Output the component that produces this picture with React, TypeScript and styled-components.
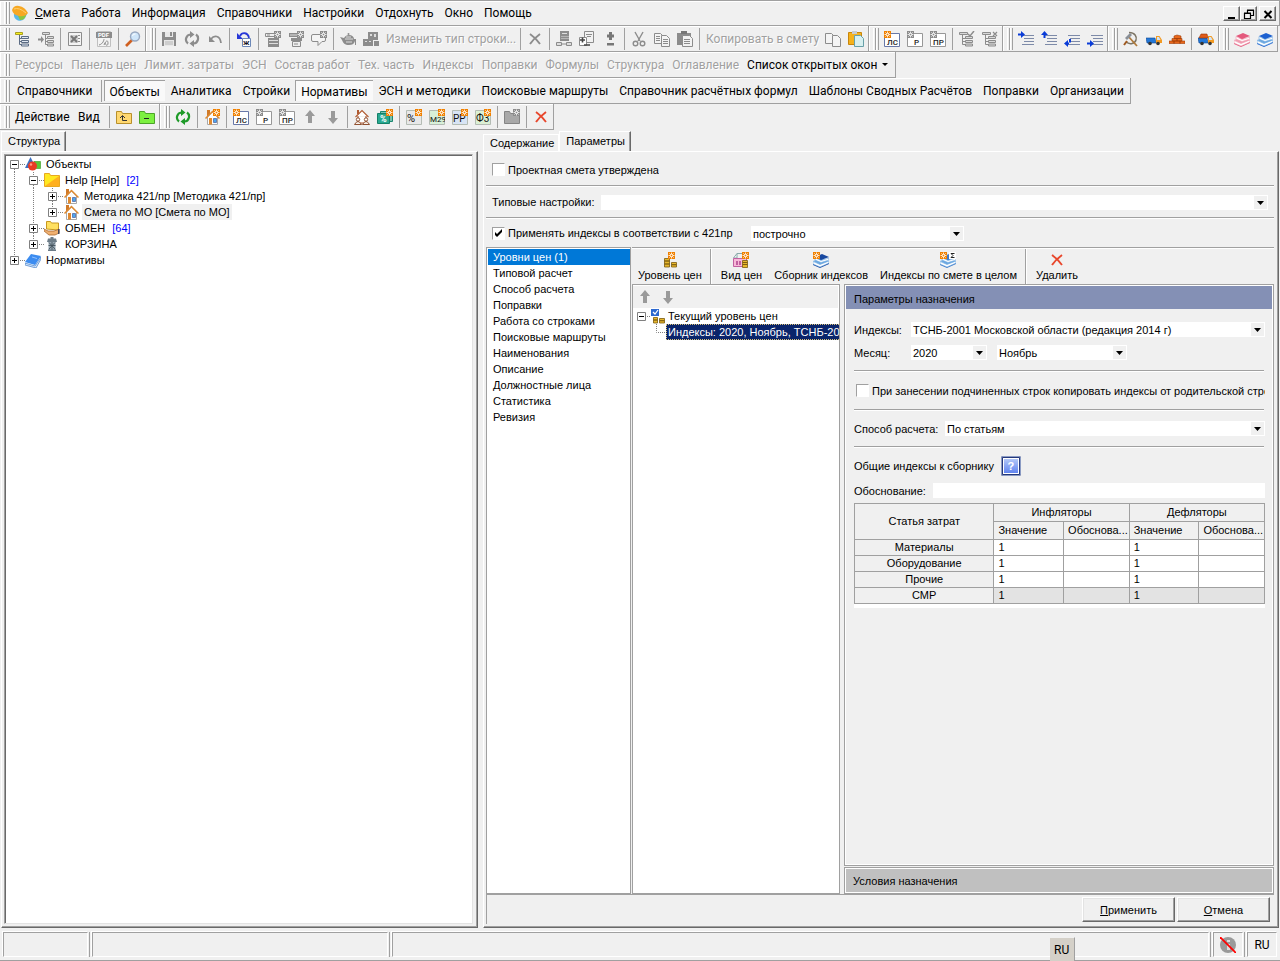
import React, { ReactNode } from "react";
import styled, { createGlobalStyle, css } from "styled-components";

const c = {
  face: "#f0f0f0",
  line: "#a0a0a0",
  dark: "#696969",
  light: "#ffffff",
  soft: "#e3e3e3",
  sky: "#0078d7",
  navy: "#0a246a",
};
const barFont = `Roboto, "Open Sans", sans-serif`;
const formFont = `"Liberation Sans", Arial, sans-serif`;

const GlobalStyle = createGlobalStyle`
  *, *::before, *::after { box-sizing: border-box; }
  body { margin: 0; background: ${c.face}; color: #000; font: 11px/16px ${formFont}; }
  button, select, input { font: inherit; color: inherit; margin: 0; border-radius: 0; }
  button { background: none; border: 0; padding: 0; white-space: nowrap; }
`;

/* ---------- icons ---------- */

const Svg = styled.svg`
  display: block;
  flex: none;
  width: 16px;
  height: 16px;
`;

const G = "#8c8c8c";

const star = (x: number, y: number, color = "#f08000") => (
  <g transform={`translate(${x} ${y})`}>
    <rect width="7" height="7" fill={color} />
    <path d="M3.500 .5v6M.5 3.500h6M1.400 1.400l4.200 4.200M5.600 1.400L1.400 5.600" stroke="#fff" strokeWidth=".8" />
    <circle cx="3.500" cy="3.500" r="1.200" fill={color} stroke="#fff" strokeWidth=".8" />
  </g>
);

const letters = (t: string, color: string, frame: string, x: number) => (
  <>
    <path d="M.5 2.500h15v13H.5z" fill="#fff" stroke={frame} />
    <text x={x} y="14" fontSize="8" fontWeight="500" fontFamily="Roboto, sans-serif" fill="#222">{t}</text>
    {star(0, 0, color)}
  </>
);
const form = (t: string, tint: string, size = 9) => (
  <>
    <path d="M.5 1.500h15v14H.5z" fill={tint} stroke="#b4bcb4" />
    <text x="1" y="13" fontSize={size} fontFamily="Roboto, sans-serif" fill="#111">{t}</text>
    {star(9, 0)}
  </>
);
const house = (
  <>
    <path d="M3 1h3v6H3z" fill="#d07a28" />
    <path d="M3.500 8v7.500h10V8L8.500 3z" fill="#fdfdfd" stroke="#a8a8a8" />
    <path d="M1.500 9.500l7-7 7 7" fill="none" stroke="#e08a30" strokeWidth="1.500" />
    <path d="M5 9h3v6.500H5z" fill="#e08a30" />
    <path d="M9.500 9.500h3v4h-3z" fill="#4ba8f0" stroke="#4a5a98" strokeWidth=".7" />
  </>
);
const grayTree = (
  <>
    <path d="M.5 1.500h8v2h-8z" fill="#d8d8d8" stroke={G} />
    <path d="M3.500 4v9.500H7M3.500 7.500H7M3.500 10.500H7" fill="none" stroke={G} />
    <path d="M6.500 5.500h7v2h-7zM6.500 9.500h7v2h-7zM6.500 13h7v2h-7z" fill="#d8d8d8" stroke={G} />
  </>
);
const cylinders = (
  <g fill="#e8b72c" stroke="#7a5a10" strokeWidth=".8">
    <path d="M2.500 6.500h5v2.500h-5zM2.500 9h5v3h-5zM2.500 12h5v3h-5zM9.500 10.500h5v2.200h-5zM9.500 12.700h5V15h-5z" />
  </g>
);
const books = (a: string, b: string) => (
  <>
    <path d="M0 11.500L7 14.500l9-4V12l-9 4-7-3z" fill={b} />
    <path d="M0 9.500l7 3 9-3.500v2L7 15l-7-3z" fill="#fff" stroke={a} strokeWidth=".6" />
    <path d="M0 9l7-2.500L16 9l-9 3.500z" fill={a} />
    <path d="M2 5.500l6 3L16 6v2l-8 2.500L2 8z" fill="#fff" stroke={a} strokeWidth=".6" />
    <path d="M2 5l7-3 7 3-8 3z" fill={b} />
  </>
);
const truck = (
  <>
    <path d="M0 7h9l1 5H1z" fill="#2277d8" stroke="#124a94" strokeWidth=".6" />
    <path d="M10 5h3.500L16 9v3h-6z" fill="#f39a22" />
    <path d="M11 6h2l1.500 3H11z" fill="#cfe4f6" />
    <circle cx="4" cy="12.500" r="1.800" fill="#333" />
    <circle cx="12" cy="12.500" r="1.800" fill="#333" />
  </>
);
const rows = (arrow: string) => (
  <>
    <path d="M4 4.500h12M6 7.500h10M6 10.500h10M4 13.500h12" stroke="#7d8aa8" />
    <path d={arrow} fill="#0a3cd8" />
  </>
);
const cycle = (color: string) => (
  <>
    <path d="M4 12.500A5 5 0 0 1 6.500 3.500M12 3.500a5 5 0 0 1-2.500 9" fill="none" stroke={color} strokeWidth="2.200" />
    <path d="M6 0l4.500 3.500L6 7zM10 9v7l-4.500-3.500z" fill={color} />
  </>
);
const folder = (a: string, b: string) => (
  <path d="M.5 14.500V2.500h5l1 2h9v10z" fill={a} stroke={b} />
);
const cross = (color: string) => (
  <path d="M3 3c3 2 7 6 10 10M13 3C9 6 5 10 3 13" fill="none" stroke={color} strokeWidth="1.900" />
);
const pages = (a: string, lines: boolean) => (
  <g fill={a} stroke={G}>
    <path d="M.5 2.500h6l2 2v8h-8z" />
    <path d="M7.500 4.500h5l3 3v8h-8z" />
    {lines && <path d="M2 5.500h4M2 7.500h4M2 9.500h4M9 8.500h5M9 10.500h5M9 12.500h5" />}
  </g>
);

const ICONS: Record<string, ReactNode> = {
  app: (
    <>
      <path d="M2 9a6 6 0 0 0 11 4l2-4z" fill="#5ab8e8" />
      <path d="M8 15a6 6 0 0 0 6-5l-8 1z" fill="#8cc63f" />
      <path d="M0 5Q2 0 7 1q6 1 9 7-3 4-9 3Q1 10 0 5z" fill="#f7a823" />
      <path d="M2 4q5-2 12 4" stroke="#ffd070" fill="none" />
    </>
  ),
  treeYellow: (
    <>
      <path d="M.5 1.500h7v2h-7z" fill="#f8f020" stroke="#a8a020" />
      <path d="M4.500 4v9.500H7M4.500 7.500H7M4.500 10.500H7" fill="none" stroke="#5c6c84" />
      <path d="M6.500 5.500h7v2h-7zM6.500 9.500h7v2h-7zM6.500 13h7v2h-7z" fill="#dfe7f2" stroke="#5c6c84" />
    </>
  ),
  treeIndent: (
    <>
      <path d="M4.500 1.500h7v2h-7z" fill="#ddd" stroke={G} />
      <path d="M7.500 4v9.500H9M7.500 7.500H9M7.500 10.500H9" fill="none" stroke={G} />
      <path d="M9.500 5.500h6v2h-6zM9.500 9.500h6v2h-6zM9.500 13h6v2h-6z" fill="#ddd" stroke={G} />
      <path d="M0 7.500h3V5l3 3.500L3 12V9.500H0z" fill={G} />
    </>
  ),
  excel: (
    <>
      <path d="M1.500 1.500h13v13h-13z" fill="#f4f4f4" stroke={G} />
      <path d="M3 4h8v8H3z" fill="#d0d0d0" />
      <path d="M4 5l6 6M10 5l-6 6" stroke="#777" strokeWidth="2" />
      <path d="M11 4.500h2M11 7.500h2M11 10.500h2" stroke={G} />
    </>
  ),
  pdf: (
    <>
      <path d="M1.500.5h13v15h-13z" fill="#f4f4f4" stroke="#c0c0c0" />
      <path d="M0 1h16v6H0z" fill={G} />
      <text x="2" y="6" fontSize="6" fontWeight="700" fontFamily="Roboto, sans-serif" fill="#fff">PDF</text>
      <path d="M3 14c4-1 5-5 5-6M8 14c2-5 4-5 4-2s-2 3-3 0" fill="none" stroke={G} />
    </>
  ),
  magnifier: (
    <>
      <path d="M7 9l-6 6" stroke="#d06020" strokeWidth="2.600" />
      <circle cx="10" cy="5.500" r="4.500" fill="#cfe6fa" stroke="#98a8c0" strokeWidth="1.400" />
      <path d="M7.500 5a2.500 2.500 0 0 1 3-2" stroke="#fff" fill="none" />
    </>
  ),
  save: (
    <>
      <path d="M1 1h14v14H1z" fill={G} />
      <path d="M4 1h8v5H4zM3 9h10v6H3z" fill="#e8e8e8" />
      <path d="M9 1h2v4H9z" fill={G} />
      <path d="M4 11h8M4 13h8" stroke="#b4b4b4" />
    </>
  ),
  cycleGray: cycle(G),
  cycleGreen: cycle("#1e9a28"),
  undo: (
    <>
      <path d="M4 8c3-4 9-4 10 4" fill="none" stroke={G} strokeWidth="1.800" />
      <path d="M2 5v6h6z" fill={G} />
    </>
  ),
  undoLetter: (
    <>
      <path d="M4 5c2-4 8-4 9 2" fill="none" stroke="#2838d8" strokeWidth="1.800" />
      <path d="M1 2v6h6z" fill="#2838d8" />
      <path d="M6.500 7.500h8v8h-8z" fill="#fff" stroke="#6c88b8" />
      <text x="7" y="14" fontSize="8" fontWeight="500" fontFamily="Roboto, sans-serif" fill="#112">ж</text>
    </>
  ),
  tableTop: (
    <>
      <path d="M.5 2.500h9v3h-9z" fill="#eee" stroke={G} />
      <path d="M2 4h3" stroke={G} />
      <path d="M3 7h11v9H3z" fill={G} />
      <path d="M4 9.500h9M4 12.500h9" stroke="#ddd" />
      {star(9, 0, G)}
    </>
  ),
  tableBottom: (
    <>
      <path d="M1 2h9v4H1zM3 7h11v3H3z" fill={G} />
      <path d="M2 4h7" stroke="#ddd" />
      <path d="M4.500 10.500h8v5h-8z" fill="#eee" stroke={G} />
      <path d="M6 13h4" stroke={G} />
      {star(9, 0, G)}
    </>
  ),
  comment: (
    <>
      <path d="M2 3.500h11q1.500 0 1.500 1.500v4q0 1.500-1.500 1.500h-2L7 14.500v-4H2Q.5 10.500.5 9V5Q.5 3.500 2 3.500z" fill="#f4f4f4" stroke={G} />
      {star(9, 0, G)}
    </>
  ),
  teapot: (
    <>
      <path d="M0 6l4 1c1-2 3-3 5-3 3 0 5 2 5 4h2v6h-1v-4c-1 3-3 4-6 4-4 0-6-2-7-5z" fill={G} />
      <path d="M6 6h5M5 8h8M6 11h6" stroke="#ddd" />
      <circle cx="8.500" cy="3" r="1" fill={G} />
    </>
  ),
  blocks: (
    <>
      <path d="M5 1h10v8H5zM0 8h10v7H0zM11 10h5v5h-5z" fill={G} />
      <path d="M7 3h2v2H7zM11 3h2v3h-2zM2 10h2v1H2zM6 10h2v1H6zM2 13h6" fill="#ddd" />
    </>
  ),
  crossGray: cross(G),
  crossRed: cross("#e8472c"),
  calcNodes: (
    <>
      <path d="M4 0h9v10H4z" fill={G} />
      <path d="M6 2.500h5" stroke="#ddd" />
      <path d="M5.500 5.500h7M5.500 7.500h7" stroke="#ddd" strokeDasharray="1 1" />
      <path d="M.5 11.500h5v3h-5zM10.500 11.500h5v3h-5zM6 13h4" fill="#ddd" stroke={G} />
    </>
  ),
  docPlus: (
    <>
      <path d="M5.500.5h9v11h-9z" fill="#f2f2f2" stroke={G} />
      <path d="M7 3.500h6M8 5.500h4" stroke={G} />
      <path d="M.5 6.500h7v8h-7z" fill="#fff" stroke={G} />
      <path d="M1 9h5M3.500 6.500v5M5 14h6" stroke="#444" strokeWidth="1.600" />
    </>
  ),
  plusMinus: <path d="M7 1h3v2.500h2v3h-2V9H7V6.500H5v-3h2zM5 12h7v2.500H5z" fill="#777" />,
  cut: (
    <g fill="none" stroke={G} strokeWidth="1.400">
      <path d="M4 1l5 9M12 1L7 10" />
      <circle cx="4.500" cy="12.500" r="2.300" />
      <circle cx="11.500" cy="12.500" r="2.300" />
    </g>
  ),
  copy: pages("#f4f4f4", true),
  copyPlain: pages("#f4f4f4", false),
  paste: (
    <>
      <path d="M0 2h14v12H0z" fill={G} />
      <path d="M4 0h6v3H4z" fill="#777" />
      <path d="M5.500 4.500h7l3 3v8h-10z" fill="#f2f2f2" stroke={G} />
      <path d="M7 8.500h6M7 10.500h6M7 12.500h6" stroke={G} />
    </>
  ),
  pasteColor: (
    <>
      <path d="M.5 1.500h13v12H.5z" fill="#f5b21c" stroke="#c8860c" />
      <path d="M4 0h5v3H4z" fill="#c8ccd0" />
      <path d="M6.500 4.500h6l3 3v8h-9z" fill="#d8f0f0" stroke="#68a0a8" />
    </>
  ),
  ls: letters("ЛС", "#f08000", "#6878a8", 3),
  r: letters("Р", G, "#989898", 7),
  pr: letters("ПР", G, "#989898", 3),
  treeCheck: <>{grayTree}<path d="M9 3l2 2 4-5" fill="none" stroke={G} strokeWidth="1.500" /></>,
  treeCross: <>{grayTree}<path d="M11 1l4 4M15 1l-4 4" stroke={G} strokeWidth="1.200" /></>,
  rows1: rows("M0 2.500h3V0l4 3.500L3 7V4.500H0z"),
  rows2: rows("M2.500 7V4H0l3.500-4L7 4H4.500v3z"),
  rows3: rows("M7 11.500H4V9l-4 3.500L4 16v-2.500h1V8h2z"),
  rows4: rows("M0 11.500h3V9l4 3.500L3 16v-2.500H0z"),
  hammer: (
    <>
      <path d="M6 1.500c6 0 8 4 7 7.500s-6 5-10 2" fill="none" stroke="#7c7464" strokeWidth="1.500" />
      <path d="M5 5l9 10" stroke="#b07a3c" strokeWidth="1.800" />
      <path d="M2 7l5-5 2 2-5 5z" fill="#8a9098" />
      <path d="M4 10l-3 4" stroke="#a05a20" strokeWidth="2" />
    </>
  ),
  truck,
  bricks: (
    <g fill="#e8681c" stroke="#a03c08" strokeWidth=".6">
      <path d="M5 5l3-1 4 1v2.500H5zM3 7.500h5v2.500H3zM8 7.500h5v2.500H8zM0 10h5v2.500H0zM5 10h6v2.500H5zM11 10h5v2.500h-5z" />
    </g>
  ),
  truckBricks: <>{truck}<path d="M1 7l2-4h6l1 4z" fill="#e05a18" stroke="#98380a" strokeWidth=".6" /></>,
  booksPink: books("#f09cb0", "#e4587c"),
  booksBlue: books("#6ca8e0", "#1c60d0"),
  folderUp: <>{folder("#ffd870", "#b8902c")}<path d="M6.500 7v4.500H11M4 9l2.500-2.500L9 9" fill="none" stroke="#333" /></>,
  folderGreen: <>{folder("#7cf040", "#4ca428")}<path d="M5 9.500h5" stroke="#222" /></>,
  folderGray: <>{folder("#a8a8a8", "#848484")}{star(9, 0, G)}</>,
  folderYellow: (
    <>
      <path d="M.5 14.500V1.500h5l1 2h9v11z" fill="#ffe820" stroke="#e8a820" />
      <path d="M1 14L15 4v10z" fill="#ffb020" />
    </>
  ),
  house,
  houseStar: <>{house}{star(9, 0)}</>,
  housePeople: (
    <>
      <path d="M3 1h2v4H3z" fill="#b05a30" />
      <path d="M1.500 8L8 1.500 14.500 8M4 7v7h8V7" fill="#fff" stroke="#b05a30" strokeWidth="1.100" />
      <circle cx="4" cy="10.500" r="1.700" fill="#fff" stroke="#905030" />
      <circle cx="12" cy="10.500" r="1.700" fill="#fff" stroke="#905030" />
      <path d="M.5 15.500q3.500-6 7 0zM8.500 15.500q3.500-6 7 0z" fill="#f8f0e8" stroke="#905030" />
    </>
  ),
  money: (
    <>
      <path d="M3.500 2.500h12v10h-12z" fill="#78c0b0" stroke="#1c8870" />
      <path d="M.5 4.500h12v10H.5z" fill="#28a890" stroke="#148068" />
      <text x="3" y="13" fontSize="9" fontWeight="700" fontFamily="Roboto, sans-serif" fill="#fff">%</text>
      {star(9, 0)}
    </>
  ),
  percent: form("%", "#e8e8e8", 11),
  m29: form("М29", "#d8f0d8", 8),
  rr: form("РР", "#d8e4f4", 10),
  f3: form("Ф3", "#dcf0d4", 10),
  up: <path d="M8 1l5 6h-3v7H6V7H3z" fill="#9a9a9a" />,
  down: <path d="M8 15L3 9h3V2h4v7h3z" fill="#9a9a9a" />,
  shapes: (
    <>
      <path d="M0 12L5.500 1 11 12z" fill="#3c70c0" />
      <path d="M9 5.500h6.500v7H9z" fill="#58c838" stroke="#389820" strokeWidth=".6" />
      <circle cx="7.500" cy="10" r="4.500" fill="#e83c24" />
      <circle cx="6" cy="8.500" r="1.200" fill="#ff9c88" />
    </>
  ),
  exchange: (
    <>
      <path d="M2.500 9V1.500h4l1 1.500h7v7z" fill="#ffe060" stroke="#c89820" />
      <path d="M0 9l4 2h6l3-1 2-1v4l-4 2H5L0 11z" fill="#f0b070" stroke="#a86830" strokeWidth=".8" />
      <path d="M14 9h1.500v5H14z" fill="#445" />
    </>
  ),
  trash: (
    <>
      <path d="M6.500 1h3v2h-3zM4 2.500h8l1 3.500H3z" fill="#6c7c88" />
      <path d="M4.500 6h7v8h-7z" fill="#98a8b4" />
      <path d="M5 6.500l6 6.500M11 6.500L5 13M4.500 9.500h7M8 6v8" stroke="#44525c" strokeWidth=".9" />
      <path d="M4 13.500h8V15H4z" fill="#6c7c88" />
    </>
  ),
  book: (
    <>
      <path d="M0 11l10 3 6-9v2l-5 9-11-3z" fill="#d8e8fa" stroke="#2468c0" strokeWidth=".6" />
      <path d="M6 2l10 2-6 9-10-3z" fill="#3c8cf0" />
      <path d="M7 5l5 1.500" stroke="#90c0ff" />
    </>
  ),
  level: <>{cylinders}{star(6, 0)}</>,
  levelCheck: (
    <>
      <g fill="#e8b72c" stroke="#7a5a10" strokeWidth=".8">
        <path d="M3.500 9.500h4v2.500h-4zM3.500 12h4v3h-4zM9.500 10.500h5v2.200h-5zM9.500 12.700h5V15h-5z" />
      </g>
      <path d="M1 1h8v7H1z" fill="#2c68d0" />
      <path d="M3 4l2 2 3-4" fill="none" stroke="#fff" strokeWidth="1.200" />
    </>
  ),
  priceKind: (
    <>
      <path d="M4 1.500h5M.5 6l3.500-4.500V6z" stroke="#88a8a8" fill="#fff" />
      <path d="M.5 6.500h13v8H.5z" fill="#f8b8d8" stroke="#c060a0" />
      <path d="M3 9h2v4H3zM6 9h2v4H6z" fill="#c060a0" />
      <path d="M9.500 8.500h5v2h-5zM9.500 10.500h5v2h-5zM9.500 12.500h5v3h-5z" fill="#e8b72c" stroke="#7a5a10" strokeWidth=".8" />
      {star(9, 0)}
    </>
  ),
  collection: <>{books("#6ca8e0", "#1848a0")}{star(0, 0)}</>,
  collectionSum: (
    <>
      {books("#6ca8e0", "#3c78c8")}
      {star(0, 0)}
      <path d="M9 0h7v7H9z" fill="#fff" />
      <path d="M14.500 1.500H11L13 3.500 11 5.500h3.500" fill="none" stroke="#222" />
    </>
  ),
  mute: (
    <>
      <circle cx="8" cy="8" r="8" fill="#9a9a9a" />
      <path d="M7 3h3v2H7zM7 7h3v6H7z" fill="#ddd" />
      <path d="M0 0l16 16" stroke="#f00" strokeWidth="1.800" />
    </>
  ),
  minimize: <path d="M4 10h7v2H4z" />,
  restore: <path d="M6.500 6V3.500h6v5H10M6 3h7M3.500 6.500h6v5h-6zM3 6h7" fill="none" stroke="#000" strokeWidth="1.200" />,
  close: <path d="M4.500 4l7 7M11.500 4l-7 7" stroke="#000" strokeWidth="2" />,
};

const Icon = ({ name }: { name: string }) => (
  <Svg viewBox="0 0 16 16" aria-hidden="true">{ICONS[name]}</Svg>
);

/* ---------- toolbars ---------- */

const BarRow = styled.div`
  display: flex;
  flex: none;
  height: 26px;
  overflow: hidden;
  font: 12px/16px ${barFont};
`;

const Bar = styled.div<{ $grow?: boolean }>`
  display: flex;
  flex: ${(p) => (p.$grow ? "1 0 auto" : "none")};
  align-items: center;
  padding: 0 1px 0 4px;
  border: solid ${c.line};
  border-width: 0 1px 1px 0;
  box-shadow: inset 1px 1px ${c.light};
`;

const MenuRow = styled(BarRow)`
  border-top: 1px solid ${c.line};
`;

const Grip = styled.span`
  flex: none;
  width: 6px;
  height: 22px;
  margin-right: 1px;
  background: repeating-linear-gradient(90deg, ${c.light} 0 1px, ${c.face} 1px 2px, ${c.line} 2px 3px);
`;

const Divider = styled.span`
  flex: none;
  align-self: stretch;
  width: 1px;
  margin: 2px 2px 1px 3px;
  background: ${c.line};
`;

const AppIcon = styled.span`
  padding: 0 1px;
`;

const IconButton = styled.button`
  display: grid;
  place-items: center;
  flex: none;
  width: 23px;
  height: 22px;
`;

const TextButton = styled.button<{ $wide?: number }>`
  flex: none;
  height: 22px;
  padding: 0 5px 0 6px;
  ${(p) => p.$wide && css`width: ${p.$wide}px; padding: 0 4px; text-align: left;`}
  &:disabled {
    color: ${c.line};
    text-shadow: 1px 1px ${c.light};
  }
`;

const WindowButtonName = styled(TextButton)`
  padding: 0 4px;
`;

const PressedButton = styled(TextButton)`
  height: 21px;
  padding: 1px 5px 0 5px;
  border: solid ${c.line};
  border-width: 1px 0 0 1px;
  background: #f9f9f9;
`;

const Caret = styled.span`
  display: inline-block;
  margin: 0 2px 3px 5px;
  border: 3px solid transparent;
  border-top-color: #000;
  border-bottom: 0;
`;

const MdiButtons = styled.div`
  display: flex;
  margin-left: auto;
  padding-right: 2px;
`;

const MdiButton = styled.button<{ $apart?: boolean }>`
  display: grid;
  place-items: center;
  width: 17px;
  height: 15px;
  overflow: hidden;
  margin-left: ${(p) => (p.$apart ? 2 : 0)}px;
  border: 1px solid;
  border-color: ${c.light} ${c.dark} ${c.dark} ${c.light};
  box-shadow: inset -1px -1px ${c.line};
`;

type Item = string | [string, number];
const Tools = ({ items }: { items: Item[] }) => (
  <Bar role="toolbar">
    <Grip />
    {items.map((it, i) =>
      it === "|" ? <Divider key={i} />
        : typeof it === "string" ? <IconButton key={i} aria-label={it}><Icon name={it} /></IconButton>
          : <TextButton key={i} disabled $wide={it[1]}>{it[0]}</TextButton>,
    )}
  </Bar>
);

const MENU = ["Работа", "Информация", "Справочники", "Настройки", "Отдохнуть", "Окно", "Помощь"];
const WINDOWS = ["Ресурсы", "Панель цен", "Лимит. затраты", "ЭСН", "Состав работ", "Тех. часть", "Индексы", "Поправки", "Формулы", "Структура", "Оглавление"];
const SECTIONS = ["ЭСН и методики", "Поисковые маршруты", "Справочник расчётных формул", "Шаблоны Сводных Расчётов", "Поправки", "Организации"];

/* ---------- panels ---------- */

const Window = styled.div`
  display: flex;
  flex-direction: column;
  min-height: 100vh;
  cursor: default;
`;

const Main = styled.main`
  display: grid;
  grid-template-columns: 477px minmax(0, 1fr);
  gap: 5px;
  flex: 1;
  padding: 0 1px 2px 1px;
`;

const Column = styled.section`
  display: flex;
  flex-direction: column;
  min-width: 0;
`;

const Tabs = styled.div`
  display: flex;
  flex: none;
  align-items: flex-end;
  height: 21px;
`;

const Tab = styled.button<{ $active?: boolean }>`
  height: ${(p) => (p.$active ? 20 : 17)}px;
  padding: ${(p) => (p.$active ? "0 5px 2px 6px" : "0 4px 0 6px")};
  border: 1px solid ${c.light};
  border-bottom: 0;
  ${(p) => p.$active && css`
    border-right-color: ${c.dark};
    box-shadow: inset -1px 0 ${c.line};
  `}
`;

const Raised = styled.div`
  display: flex;
  flex-direction: column;
  flex: 1;
  padding: 2px 4px 3px 2px;
  border: 1px solid;
  border-color: ${c.light} ${c.dark} ${c.dark} ${c.light};
  box-shadow: inset -1px -1px ${c.line};
`;

const TreeBox = styled.div`
  flex: 1;
  border: 1px solid;
  border-color: ${c.line} ${c.soft} ${c.soft} ${c.line};
  box-shadow: inset 1px 1px ${c.dark};
  padding: 1px;
  background: #fff;
`;

const TreeRow = styled.div`
  display: flex;
  height: 16px;
  white-space: nowrap;
`;

const Node = styled.span<{ $selected?: boolean }>`
  margin-left: 3px;
  padding: 0 2px;
  background: ${(p) => (p.$selected ? c.face : "none")};
`;

const Count = styled.span`
  margin-left: 4px;
  color: #00f;
`;

const Cell = styled.svg`
  display: block;
  flex: none;
`;

const guide = { stroke: "#808080", strokeDasharray: "1 1" };
const Guide = ({ on, w = 19 }: { on?: boolean; w?: number }) => (
  <Cell width={w} height="16">{on && <path d="M8.500 0v16" {...guide} />}</Cell>
);
const Toggle = ({ open, up, below, w = 19 }: { open?: boolean; up?: boolean; below?: boolean; w?: number }) => (
  <button aria-label={open ? "Свернуть" : "Развернуть"}>
    <Cell width={w} height="16">
      {up && <path d="M8.500 0v4" {...guide} />}
      {below && <path d="M8.500 13v3" {...guide} />}
      <path d={`M14 8.500H${w}`} {...guide} />
      <path d="M4.500 4.500h8v8h-8z" fill="#fff" stroke="#808080" />
      <path d={open ? "M6 8.500h5" : "M6 8.500h5M8.500 6v5"} stroke="#000" />
    </Cell>
  </button>
);

const Rule = styled.hr`
  flex: none;
  height: 2px;
  margin: 0;
  border: 0;
  border-top: 1px solid ${c.line};
  border-bottom: 1px solid ${c.light};
`;

const FormRow = styled.div<{ $h: number }>`
  display: flex;
  flex: none;
  align-items: center;
  height: ${(p) => p.$h}px;
  padding: 0 6px;
  white-space: nowrap;
`;

const CheckLabel = styled.label`
  display: flex;
  align-items: center;
  gap: 3px;
  min-width: 0;
  overflow: hidden;
`;

const Check = styled.input`
  appearance: none;
  flex: none;
  width: 13px;
  height: 13px;
  background: #fff;
  border: 1px solid;
  border-color: ${c.line} ${c.light} ${c.light} ${c.line};
  &:checked {
    background: #fff url("data:image/svg+xml,%3Csvg xmlns='http://www.w3.org/2000/svg' width='11' height='11'%3E%3Cpath d='M2 4v3l2 2 5-5V1L4 6z'/%3E%3C/svg%3E");
  }
`;

const Select = styled.span<{ $w?: number }>`
  position: relative;
  display: flex;
  flex: ${(p) => (p.$w ? `0 0 ${p.$w}px` : "1 1 0")};
  height: 15px;
  & > select {
    appearance: none;
    width: 100%;
    height: 15px;
    padding: 1px 16px 0 2px;
    border: 0;
    background: #fff;
    line-height: 14px;
  }
  & > svg {
    position: absolute;
    top: 1px;
    right: 1px;
    pointer-events: none;
  }
`;

const Drop = ({ id, value, w, label }: { id: string; value: string; w?: number; label?: string }) => (
  <Select $w={w}>
    <select id={id} aria-label={label}><option>{value}</option></select>
    <svg width="13" height="13" aria-hidden="true">
      <path d="M0 0h13v13H0z" fill={c.face} />
      <path d="M3 5h7L6.500 9z" />
    </svg>
  </Select>
);

const TextInput = styled.input`
  flex: 1;
  min-width: 0;
  height: 15px;
  padding: 0 2px;
  border: 0;
  background: #fff;
`;

const ShortLabel = styled.label<{ $w?: number }>`
  flex: none;
  width: ${(p) => (p.$w ? `${p.$w}px` : "auto")};
`;

const Work = styled.div`
  display: grid;
  grid-template-columns: 145px minmax(0, 1fr);
  gap: 1px;
  flex: 1;
`;

const Sections = styled.ul`
  margin: 0;
  padding: 1px 0 0 1px;
  list-style: none;
  background: #fff;
  border: 1px solid ${c.line};
`;

const SectionItem = styled.li<{ $active?: boolean }>`
  height: 16px;
  padding-left: 5px;
  color: ${(p) => (p.$active ? "#fff" : "#000")};
  background: ${(p) => (p.$active ? c.sky : "none")};
`;

const ActionBar = styled.div`
  display: flex;
  flex: none;
  height: 37px;
  border-top: 1px solid ${c.line};
  box-shadow: inset 0 1px ${c.light};
`;

const Action = styled.button`
  display: flex;
  flex-direction: column;
  align-items: center;
  padding: 4px 6px 0 6px;
  line-height: 14px;
`;

const ActionSplit = styled.span`
  width: 2px;
  margin: 1px 3px 0 2px;
  border-left: 1px solid ${c.line};
  border-right: 1px solid ${c.light};
`;

const Panes = styled.div`
  display: grid;
  grid-template-columns: 208px minmax(0, 1fr);
  gap: 4px;
  flex: 1;
`;

const Levels = styled.div`
  overflow: hidden;
  border: 1px solid ${c.line};
  background: #fff;
`;

const LevelTools = styled.div`
  display: flex;
  height: 22px;
  margin: 1px 1px 0 0;
  background: ${c.face};
`;

const Highlight = styled.span`
  flex: 1;
  padding-left: 1px;
  color: #fff;
  background: ${c.navy};
  border: 1px dotted #d8c078;
  line-height: 14px;
`;

const LevelName = styled.span`
  padding-left: 2px;
`;

const Stack = styled.div`
  display: flex;
  flex-direction: column;
  gap: 1px;
  min-width: 0;
`;

const Frame = styled.div<{ $grow?: boolean }>`
  flex: ${(p) => (p.$grow ? 1 : "none")};
  padding: 1px;
  border: 1px solid ${c.line};
  box-shadow: inset 1px 1px ${c.light}, inset -1px -1px ${c.light};
`;

const FrameTitle = styled.h2<{ $active?: boolean }>`
  margin: 0;
  padding: ${(p) => (p.$active ? "5px 8px 2px 8px" : "4px 7px 3px 7px")};
  font: 11px/16px ${formFont};
  background: ${(p) => (p.$active ? "#8490b5" : "#c0c0c0")};
`;

const Params = styled.div`
  padding: 9px 7px 0 8px;
  & > ${FormRow} { padding: 0; }
  & > ${Rule} { margin-right: 1px; }
  & ${CheckLabel} { padding: 0 2px; }
`;

const Gap = styled.span`
  flex: 0 0 10px;
`;

const HelpButton = styled.button`
  width: 20px;
  height: 20px;
  margin-left: 7px;
  border: 2px solid #24387c;
  outline: 1px solid #8c9cc4;
  outline-offset: -1px;
  border-radius: 2px;
  box-shadow: inset 0 0 0 1px #fff;
  background: linear-gradient(#b8ccf8, #5c80f0);
  color: #fff;
  font-weight: 700;
  line-height: 14px;
`;

const GridBox = styled.div`
  margin-top: 5px;
  padding-bottom: 4px;
  background: #fff;
`;

const Grid = styled.table`
  width: 100%;
  table-layout: fixed;
  border-collapse: collapse;
  background: ${c.face};
  line-height: 15px;
  th, td {
    height: 16px;
    padding: 0 4px;
    font-weight: 400;
    border: 1px solid ${c.line};
    white-space: nowrap;
  }
  thead th { height: 18px; }
  td { background: #fff; }
  tr[data-total] td { background: #e3e3e3; }
`;

const SubHead = styled.th`
  text-align: left;
`;

const Footer = styled.div`
  display: flex;
  justify-content: flex-end;
  gap: 2px;
  padding: 2px 4px 2px 0;
  border-top: 1px solid ${c.line};
  border-left: 1px solid ${c.line};
`;

const PushButton = styled.button`
  width: 93px;
  height: 25px;
  border: 1px solid;
  border-color: ${c.light} ${c.dark} ${c.dark} ${c.light};
  box-shadow: inset -1px -1px ${c.line}, inset 1px 1px ${c.soft};
`;

const StatusBar = styled.footer`
  position: relative;
  display: flex;
  flex: none;
  gap: 1px;
  height: 31px;
  padding: 2px 3px 3px 3px;
  border-bottom: 1px solid ${c.line};
  font: 12px/16px ${barFont};
`;

const Status = styled.div<{ $w?: number }>`
  display: grid;
  place-items: center;
  flex: ${(p) => (p.$w ? `0 0 ${p.$w}px` : "1 1 0")};
  border: 1px solid;
  border-color: ${c.line} ${c.light} ${c.light} ${c.line};
  box-shadow: -1px -1px ${c.light};
`;

const StatusSplit = styled.span`
  flex: none;
  width: 1px;
  margin-right: 1px;
  background: ${c.line};
`;

const LanguageTip = styled.span`
  position: absolute;
  right: 205px;
  bottom: -1px;
  width: 25px;
  height: 24px;
  padding: 4px 0 0 4px;
  background: #d4d0c8;
  border-right: 1px solid ${c.line};
  border-top: 1px solid ${c.face};
`;

const LIST = ["Уровни цен (1)", "Типовой расчет", "Способ расчета", "Поправки", "Работа со строками", "Поисковые маршруты", "Наименования", "Описание", "Должностные лица", "Статистика", "Ревизия"];
const COSTS = ["Материалы", "Оборудование", "Прочие", "СМР"];

const act = (icon: string, text: string) => <Action><Icon name={icon} />{text}</Action>;

export default function App() {
  return (
    <Window>
      <GlobalStyle />
      <MenuRow as="nav">
        <Bar $grow>
          <Grip />
          <AppIcon><Icon name="app" /></AppIcon>
          <TextButton><u>С</u>мета</TextButton>
          {MENU.map((m) => <TextButton key={m}>{m}</TextButton>)}
          <MdiButtons>
            <MdiButton aria-label="Свернуть окно"><Icon name="minimize" /></MdiButton>
            <MdiButton aria-label="Восстановить окно"><Icon name="restore" /></MdiButton>
            <MdiButton aria-label="Закрыть окно" $apart><Icon name="close" /></MdiButton>
          </MdiButtons>
        </Bar>
      </MenuRow>
      <BarRow>
        <Tools items={["treeYellow", "treeIndent", "|", "excel", "|", "pdf", "|", "magnifier"]} />
        <Tools items={["save", "cycleGray", "undo", "|", "undoLetter", "|", "tableTop", "tableBottom", "comment", "|", "teapot", "blocks", ["Изменить тип строки...", 135], "|", "crossGray", "|", "calcNodes", "docPlus", "plusMinus", "|", "cut", "copy", "paste", "|", ["Копировать в смету", 119], "copyPlain", "pasteColor"]} />
        <Tools items={["ls", "r", "pr", "|", "treeCheck", "treeCross"]} />
        <Tools items={["rows1", "rows2", "rows3", "rows4"]} />
        <Tools items={["hammer", "truck", "bricks", "|", "truckBricks"]} />
        <Tools items={["booksPink", "booksBlue"]} />
      </BarRow>
      <BarRow>
        <Bar>
          <Grip />
          {WINDOWS.map((w) => <WindowButtonName key={w} disabled>{w}</WindowButtonName>)}
          <WindowButtonName>Список открытых окон<Caret /></WindowButtonName>
        </Bar>
      </BarRow>
      <BarRow>
        <Bar>
          <Grip />
          <TextButton>Справочники</TextButton>
          <Divider />
          <PressedButton aria-pressed="true">Объекты</PressedButton>
          <TextButton>Аналитика</TextButton>
          <TextButton>Стройки</TextButton>
          <PressedButton aria-pressed="true">Нормативы</PressedButton>
          {SECTIONS.map((s) => <TextButton key={s}>{s}</TextButton>)}
        </Bar>
      </BarRow>
      <BarRow>
        <Bar>
          <Grip />
          <TextButton $wide={63}>Действие</TextButton>
          <TextButton $wide={32}>Вид</TextButton>
          <Divider />
          <IconButton aria-label="Вверх"><Icon name="folderUp" /></IconButton>
          <IconButton aria-label="Папка"><Icon name="folderGreen" /></IconButton>
        </Bar>
        <Tools items={["cycleGreen", "|", "houseStar", "|", "ls", "r", "pr", "up", "down", "|", "housePeople", "money", "|", "percent", "m29", "rr", "f3", "|", "folderGray", "|", "crossRed"]} />
      </BarRow>

      <Main>
        <Column>
          <Tabs><Tab $active>Структура</Tab></Tabs>
          <Raised>
            <TreeBox>
              <TreeRow><Toggle open below /><Icon name="shapes" /><Node>Объекты</Node></TreeRow>
              <TreeRow><Guide on /><Toggle open up below /><Icon name="folderYellow" /><Node>Help [Help] <Count>[2]</Count></Node></TreeRow>
              <TreeRow><Guide on /><Guide on /><Toggle up below /><Icon name="house" /><Node>Методика 421/пр [Методика 421/пр]</Node></TreeRow>
              <TreeRow><Guide on /><Guide on /><Toggle up /><Icon name="house" /><Node $selected>Смета по МО [Смета по МО]</Node></TreeRow>
              <TreeRow><Guide on /><Toggle up below /><Icon name="exchange" /><Node>ОБМЕН <Count>[64]</Count></Node></TreeRow>
              <TreeRow><Guide on /><Toggle up /><Icon name="trash" /><Node>КОРЗИНА</Node></TreeRow>
              <TreeRow><Toggle up /><Icon name="book" /><Node>Нормативы</Node></TreeRow>
            </TreeBox>
          </Raised>
        </Column>

        <Column>
          <Tabs><Tab>Содержание</Tab><Tab $active>Параметры</Tab></Tabs>
          <Raised>
            <FormRow $h={31}>
              <CheckLabel><Check type="checkbox" />Проектная смета утверждена</CheckLabel>
            </FormRow>
            <Rule />
            <FormRow $h={30}>
              <ShortLabel htmlFor="preset" $w={109}>Типовые настройки:</ShortLabel>
              <Drop id="preset" value="" />
            </FormRow>
            <Rule />
            <FormRow $h={28}>
              <ShortLabel as="span" $w={259}>
                <CheckLabel><Check type="checkbox" defaultChecked />Применять индексы в соответствии с 421пр</CheckLabel>
              </ShortLabel>
              <Drop id="mode" label="Применение индексов" value="построчно" w={213} />
            </FormRow>
            <Work>
              <Sections>
                {LIST.map((s, i) => <SectionItem key={s} $active={i === 0}>{s}</SectionItem>)}
              </Sections>
              <Column as="div">
                <ActionBar>
                  {act("level", "Уровень цен")}
                  <ActionSplit />
                  {act("priceKind", "Вид цен")}
                  {act("collection", "Сборник индексов")}
                  {act("collectionSum", "Индексы по смете в целом")}
                  <ActionSplit />
                  {act("crossRed", "Удалить")}
                </ActionBar>
                <Panes>
                  <Levels>
                    <LevelTools>
                      <IconButton aria-label="Выше"><Icon name="up" /></IconButton>
                      <IconButton aria-label="Ниже"><Icon name="down" /></IconButton>
                    </LevelTools>
                    <TreeRow><Toggle open w={17} /><Icon name="levelCheck" /><LevelName>Текущий уровень цен</LevelName></TreeRow>
                    <TreeRow>
                      <Guide w={17} />
                      <Cell width="16" height="16"><path d="M6.500 0v8.500H16" fill="none" {...guide} /></Cell>
                      <Highlight>Индексы: 2020, Ноябрь, ТСНБ-2001</Highlight>
                    </TreeRow>
                  </Levels>
                  <Stack>
                    <Frame $grow>
                      <FrameTitle $active>Параметры назначения</FrameTitle>
                      <Params>
                        <FormRow $h={23}>
                          <ShortLabel htmlFor="indexes" $w={57}>Индексы:</ShortLabel>
                          <Drop id="indexes" value="ТСНБ-2001 Московской области (редакция 2014 г)" />
                        </FormRow>
                        <FormRow $h={23}>
                          <ShortLabel htmlFor="year" $w={57}>Месяц:</ShortLabel>
                          <Drop id="year" value="2020" w={76} />
                          <Gap />
                          <Drop id="month" label="Месяц" value="Ноябрь" w={130} />
                        </FormRow>
                        <FormRow $h={6} />
                        <Rule />
                        <FormRow $h={37}>
                          <CheckLabel><Check type="checkbox" />При занесении подчиненных строк копировать индексы от родительской строки</CheckLabel>
                        </FormRow>
                        <Rule />
                        <FormRow $h={35}>
                          <ShortLabel htmlFor="method" $w={91}>Способ расчета:</ShortLabel>
                          <Drop id="method" value="По статьям" />
                        </FormRow>
                        <Rule />
                        <FormRow $h={35}>Общие индексы к сборнику<HelpButton aria-label="Справка">?</HelpButton></FormRow>
                        <FormRow $h={15}>
                          <ShortLabel htmlFor="reason" $w={79}>Обоснование:</ShortLabel>
                          <TextInput id="reason" />
                        </FormRow>
                        <GridBox>
                          <Grid>
                            <colgroup>
                              <col width="34%" /><col width="17%" /><col width="16%" /><col width="17%" /><col width="16%" />
                            </colgroup>
                            <thead>
                              <tr><th rowSpan={2}>Статья затрат</th><th colSpan={2}>Инфляторы</th><th colSpan={2}>Дефляторы</th></tr>
                              <tr><SubHead>Значение</SubHead><SubHead>Обоснова...</SubHead><SubHead>Значение</SubHead><SubHead>Обоснова...</SubHead></tr>
                            </thead>
                            <tbody>
                              {COSTS.map((n) => (
                                <tr key={n} data-total={n === "СМР" || undefined}>
                                  <th scope="row">{n}</th><td>1</td><td /><td>1</td><td />
                                </tr>
                              ))}
                            </tbody>
                          </Grid>
                        </GridBox>
                      </Params>
                    </Frame>
                    <Frame><FrameTitle>Условия назначения</FrameTitle></Frame>
                  </Stack>
                </Panes>
              </Column>
            </Work>
            <Footer>
              <PushButton><u>П</u>рименить</PushButton>
              <PushButton><u>О</u>тмена</PushButton>
            </Footer>
          </Raised>
        </Column>
      </Main>

      <StatusBar>
        <Status $w={85} />
        <StatusSplit />
        <Status $w={296} />
        <StatusSplit />
        <Status />
        <StatusSplit />
        <Status $w={30}><Icon name="mute" /></Status>
        <StatusSplit />
        <Status $w={30}>RU</Status>
        <LanguageTip>RU</LanguageTip>
      </StatusBar>
    </Window>
  );
}
